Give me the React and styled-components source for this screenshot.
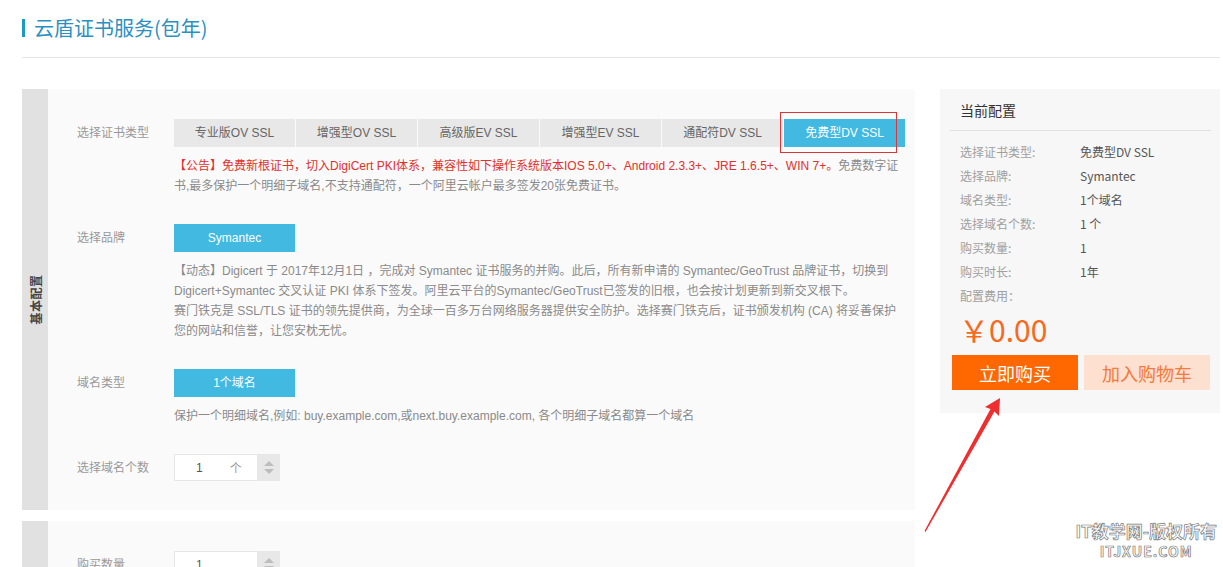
import styled, { createGlobalStyle } from "styled-components";

const GlobalStyle = createGlobalStyle`
  html, body {
    margin: 0;
    padding: 0;
    background: #fff;
  }
  body {
    font-family: "Liberation Sans", "Noto Sans CJK SC", sans-serif;
    font-size: 12px;
    color: #666;
  }
`;

const certTypes = [
  "专业版OV SSL",
  "增强型OV SSL",
  "高级版EV SSL",
  "增强型EV SSL",
  "通配符DV SSL",
  "免费型DV SSL",
];

const summary = [
  ["选择证书类型:", "免费型DV SSL"],
  ["选择品牌:", "Symantec"],
  ["域名类型:", "1个域名"],
  ["选择域名个数:", "1 个"],
  ["购买数量:", "1"],
  ["购买时长:", "1年"],
];

const Stepper = ({ value, unit }) => (
  <StepperWrap>
    <StepperInput>
      <span>{value}</span>
      {unit && <Unit>{unit}</Unit>}
    </StepperInput>
    <Spinner>
      <Arrow $up />
      <Arrow />
    </Spinner>
  </StepperWrap>
);

const App = () => {
  return (
    <Page>
      <GlobalStyle />
      <Header>
        <Title>云盾证书服务(包年)</Title>
      </Header>
      <Content>
        <MainCol>
          <Panel>
            <Strip>
              <StripText>基本配置</StripText>
            </Strip>
            <PanelBody>
              <FieldRow>
                <Label>选择证书类型</Label>
                <Field>
                  <TabGroup>
                    {certTypes.map((t, i) => (
                      <Tab key={t} $active={i === certTypes.length - 1}>
                        {t}
                      </Tab>
                    ))}
                  </TabGroup>
                  <Note>
                    <Warn>
                      【公告】免费新根证书，切入DigiCert PKI体系，兼容性如下操作系统版本IOS 5.0+、Android 2.3.3+、JRE 1.6.5+、WIN 7+。
                    </Warn>
                    免费数字证书,最多保护一个明细子域名,不支持通配符，一个阿里云帐户最多签发20张免费证书。
                  </Note>
                </Field>
              </FieldRow>

              <FieldRow>
                <Label>选择品牌</Label>
                <Field>
                  <Tab $active>Symantec</Tab>
                  <Note>
                    【动态】Digicert 于 2017年12月1日 ，完成对 Symantec 证书服务的并购。此后，所有新申请的 Symantec/GeoTrust 品牌证书，切换到
                    Digicert+Symantec 交叉认证 PKI 体系下签发。阿里云平台的Symantec/GeoTrust已签发的旧根，也会按计划更新到新交叉根下。
                    <br />
                    赛门铁克是 SSL/TLS 证书的领先提供商，为全球一百多万台网络服务器提供安全防护。选择赛门铁克后，证书颁发机构 (CA) 将妥善保护您的网站和信誉，让您安枕无忧。
                  </Note>
                </Field>
              </FieldRow>

              <FieldRow>
                <Label>域名类型</Label>
                <Field>
                  <Tab $active>1个域名</Tab>
                  <Note>
                    保护一个明细域名,例如: buy.example.com,或next.buy.example.com, 各个明细子域名都算一个域名
                  </Note>
                </Field>
              </FieldRow>

              <FieldRow>
                <Label>选择域名个数</Label>
                <Field>
                  <Stepper value="1" unit="个" />
                </Field>
              </FieldRow>
            </PanelBody>
          </Panel>

          <Panel>
            <Strip />
            <PanelBody>
              <FieldRow>
                <Label>购买数量</Label>
                <Field>
                  <Stepper value="1" />
                </Field>
              </FieldRow>
            </PanelBody>
          </Panel>
        </MainCol>

        <Sidebar>
          <SideTitle>当前配置</SideTitle>
          <InfoList>
            {summary.map(([k, v]) => (
              <InfoRow key={k}>
                <InfoKey>{k}</InfoKey>
                <InfoVal>{v}</InfoVal>
              </InfoRow>
            ))}
          </InfoList>
          <FeeLabel>配置费用：</FeeLabel>
          <Price>￥0.00</Price>
          <Actions>
            <BuyButton $primary>立即购买</BuyButton>
            <BuyButton>加入购物车</BuyButton>
          </Actions>
        </Sidebar>
      </Content>

      <Highlight />
      <Annotation viewBox="0 0 1223 567" width="1223" height="567">
        <polygon
          points="1000,398 999,416 994.5,411.5 925.5,532 924.5,531 990.5,409 985,407"
          fill="#ee2f2f"
        />
      </Annotation>
      <Watermark>
        <div>IT教学网-版权所有</div>
        <Small>ITJXUE.COM</Small>
      </Watermark>
    </Page>
  );
};

export default App;

const Page = styled.div`
  position: relative;
  width: 1223px;
  height: 567px;
  overflow: hidden;
  box-sizing: border-box;
  padding: 19px 3px 0 22px;
`;

const Header = styled.div`
  padding-bottom: 20px;
  border-bottom: 1px solid #e5e5e5;
`;

const Title = styled.h1`
  margin: 0;
  height: 18px;
  line-height: 18px;
  padding-left: 9px;
  border-left: 3px solid #1b9ac8;
  font-size: 20px;
  font-weight: normal;
  color: #2b90bf;
  font-family: "Noto Sans CJK SC", "Liberation Sans", sans-serif;
`;

const Content = styled.div`
  display: flex;
  align-items: flex-start;
  gap: 25px;
  margin-top: 31px;
`;

const MainCol = styled.div`
  width: 893px;
  display: flex;
  flex-direction: column;
  gap: 11px;
`;

const Panel = styled.div`
  display: flex;
  background: #fafafa;
`;

const Strip = styled.div`
  width: 26px;
  flex-shrink: 0;
  background: #e1e1e1;
  display: flex;
  align-items: center;
  justify-content: center;
`;

const StripText = styled.span`
  display: block;
  white-space: nowrap;
  transform: rotate(-90deg);
  font-size: 12px;
  font-weight: bold;
  letter-spacing: 0.5px;
  color: #444;
  font-family: "Noto Sans CJK SC", sans-serif;
`;

const PanelBody = styled.div`
  flex: 1;
  display: flex;
  flex-direction: column;
  gap: 28px;
  padding: 30px 16px 28px 29px;
`;

const FieldRow = styled.div`
  display: flex;
`;

const Label = styled.div`
  width: 97px;
  flex-shrink: 0;
  line-height: 28px;
  color: #999;
`;

const Field = styled.div`
  flex: 1;
`;

const TabGroup = styled.div`
  display: flex;
  gap: 1px;
`;

const Tab = styled.div`
  width: 121px;
  height: 28px;
  line-height: 28px;
  text-align: center;
  background: ${(p) => (p.$active ? "#41b9e1" : "#e8e8e8")};
  color: ${(p) => (p.$active ? "#fff" : "#666")};
  cursor: pointer;
`;

const Note = styled.p`
  margin: 9px 0 0;
  line-height: 20px;
  color: #8a8a8a;
`;

const Warn = styled.span`
  color: #e2302a;
`;

const StepperWrap = styled.div`
  display: flex;
  height: 27px;
`;

const StepperInput = styled.div`
  width: 61px;
  height: 25px;
  padding-left: 21px;
  display: flex;
  align-items: center;
  background: #fff;
  border: 1px solid #e6e6e6;
  color: #555;
`;

const Unit = styled.span`
  margin-left: 27px;
  color: #999;
`;

const Spinner = styled.div`
  width: 22px;
  background: #e8e8e8;
  display: flex;
  flex-direction: column;
  align-items: center;
  justify-content: center;
  gap: 3px;
`;

const Arrow = styled.span`
  width: 0;
  height: 0;
  border-left: 5px solid transparent;
  border-right: 5px solid transparent;
  ${(p) =>
    p.$up
      ? "border-bottom: 5px solid #bdbdbd;"
      : "border-top: 5px solid #bdbdbd;"}
`;

const Sidebar = styled.div`
  width: 281px;
  box-sizing: border-box;
  background: #f7f7f7;
  padding: 11px 9px 23px 10px;
  font-family: "Noto Sans CJK SC", "Liberation Sans", sans-serif;
`;

const SideTitle = styled.div`
  padding: 0 10px 10px;
  line-height: 20px;
  font-size: 14px;
  color: #333;
  border-bottom: 1px solid #e0e0e0;
`;

const InfoList = styled.div`
  margin-top: 9px;
  padding-left: 10px;
`;

const InfoRow = styled.div`
  display: grid;
  grid-template-columns: 120px 1fr;
  line-height: 24px;
`;

const InfoKey = styled.span`
  color: #a0a0a0;
`;

const InfoVal = styled.span`
  color: #555;
`;

const FeeLabel = styled.div`
  padding-left: 10px;
  line-height: 24px;
  color: #a0a0a0;
`;

const Price = styled.div`
  margin-top: 1px;
  padding-left: 9px;
  font-size: 30px;
  line-height: 40px;
  color: #f7691d;
`;

const Actions = styled.div`
  display: flex;
  gap: 6px;
  margin-top: 6px;
  padding-left: 2px;
`;

const BuyButton = styled.button`
  width: 126px;
  height: 35px;
  border: none;
  padding: 0;
  font-family: inherit;
  font-size: 18px;
  background: ${(p) => (p.$primary ? "#ff6700" : "#fde0cf")};
  color: ${(p) => (p.$primary ? "#fff" : "#f4793b")};
  cursor: pointer;
`;

const Highlight = styled.div`
  position: absolute;
  left: 780px;
  top: 112px;
  width: 115px;
  height: 39px;
  border: 1px solid #d9363a;
  pointer-events: none;
`;

const Annotation = styled.svg`
  position: absolute;
  left: 0;
  top: 0;
  pointer-events: none;
`;

const Watermark = styled.div`
  position: absolute;
  right: 6px;
  top: 521px;
  text-align: center;
  font-family: "Noto Sans CJK SC", sans-serif;
  font-size: 17px;
  font-weight: bold;
  line-height: 20px;
  color: #fff;
  -webkit-text-stroke: 0.7px #7a7a7a;
  pointer-events: none;
`;

const Small = styled.div`
  margin-top: 2px;
  font-size: 14px;
  line-height: 16px;
  letter-spacing: 1px;
`;
